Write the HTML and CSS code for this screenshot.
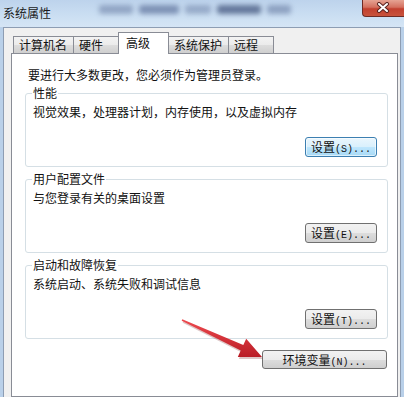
FILE: index.html
```html
<!DOCTYPE html>
<html lang="zh-CN">
<head>
  <meta charset="UTF-8">
  <meta name="viewport" content="width=device-width, initial-scale=1.0">
  <title>系统属性</title>
  <link rel="stylesheet" href="styles.css">
</head>
<body>

<div class="window">
  <div class="titlebar">
    <span class="title">系统属性</span>
    <div class="title-blur">
      <i class="b1"></i><i class="b2"></i><i class="b3"></i><i class="b4"></i><i class="b5"></i>
    </div>
    <button class="close">
      <svg width="14" height="11" viewBox="0 0 14 11">
        <path d="M3 2 L11 9 M11 2 L3 9" stroke="#5a2420" stroke-width="4" stroke-linecap="round"/>
        <path d="M3 2 L11 9 M11 2 L3 9" stroke="#ffffff" stroke-width="2" stroke-linecap="round"/>
      </svg>
    </button>
  </div>

  <div class="client">
    <div class="tabs">
      <div class="tab">计算机名</div>
      <div class="tab">硬件</div>
      <div class="tab active">高级</div>
      <div class="tab">系统保护</div>
      <div class="tab">远程</div>
    </div>

    <div class="panel">
      <p class="note">要进行大多数更改，您必须作为管理员登录。</p>

      <div class="group">
        <div class="group-title">性能</div>
        <div class="group-desc">视觉效果，处理器计划，内存使用，以及虚拟内存</div>
        <div class="group-actions">
          <button class="btn focused">设置<span class="key">(S)...</span></button>
        </div>
      </div>

      <div class="group">
        <div class="group-title">用户配置文件</div>
        <div class="group-desc">与您登录有关的桌面设置</div>
        <div class="group-actions">
          <button class="btn">设置<span class="key">(E)...</span></button>
        </div>
      </div>

      <div class="group">
        <div class="group-title">启动和故障恢复</div>
        <div class="group-desc">系统启动、系统失败和调试信息</div>
        <div class="group-actions">
          <button class="btn">设置<span class="key">(T)...</span></button>
        </div>
      </div>

      <div class="panel-actions">
        <button class="btn wide">环境变量<span class="key">(N)...</span></button>
      </div>
    </div>
  </div>

  <!-- red pointer arrow drawn over the dialog -->
  <svg class="arrow" width="404" height="397" viewBox="0 0 404 397">
    <defs>
      <linearGradient id="arrowFill" x1="0" y1="0" x2="0" y2="1">
        <stop offset="0" stop-color="#ee4a4f"/>
        <stop offset="1" stop-color="#b91c25"/>
      </linearGradient>
    </defs>
    <polygon points="182.3,319.3 243.3,345.1 246.2,338.7 262,357 237.8,356.9 240.7,350.5 181.7,320.7"
             fill="#7a1a1a" opacity="0.25" transform="translate(1,2)"/>
    <polygon points="182.3,319.3 243.3,345.1 246.2,338.7 262,357 237.8,356.9 240.7,350.5 181.7,320.7"
             fill="url(#arrowFill)"/>
  </svg>
</div>

</body>
</html>
```

FILE: styles.css
```css
body {
  margin: 0;
  padding: 0;
  font-family: "Noto Sans CJK SC", "Noto Sans", sans-serif;
  font-size: 12px;
  color: #111;
  overflow: hidden;
}

.window {
  position: relative;
  width: 404px;
  height: 397px;
  background: #b9d0e9;
  display: flex;
  flex-direction: column;
  overflow: hidden;
}

.titlebar {
  height: 27px;
  flex-shrink: 0;
  display: flex;
  align-items: flex-start;
  background: linear-gradient(to bottom, #bdd3ec, #cadef2 55%, #d5e5f5);
}

.title {
  margin: 5px 0 0 3px;
  line-height: 16px;
  color: #1b1b1b;
}

.title-blur {
  display: flex;
  gap: 6px;
  margin: 4px 0 0 48px;
  filter: blur(2.5px);
}

.title-blur i {
  display: block;
  height: 9px;
  margin-top: 1px;
  background: #60749c;
  opacity: 0.7;
  border-radius: 3px;
}

.title-blur .b1 { width: 34px; opacity: 0.5; }
.title-blur .b2 { width: 40px; }
.title-blur .b3 { width: 26px; opacity: 0.45; }
.title-blur .b4 { width: 44px; background: #3c4f78; }
.title-blur .b5 { width: 24px; opacity: 0.55; }

.close {
  margin-left: auto;
  width: 42px;
  height: 17px;
  padding: 0;
  border: 1px solid #6e2b25;
  border-top: none;
  border-right: none;
  border-radius: 0 0 0 4px;
  background: linear-gradient(to bottom, #e6a393, #d4705f 45%, #c2402f 55%, #c8533c);
  display: flex;
  align-items: center;
  justify-content: center;
  flex-shrink: 0;
}

.close svg {
  margin-left: -2px;
  margin-top: -1px;
}

.client {
  flex: 1;
  margin: 0 3px;
  border: 1px solid #8d9db3;
  border-bottom: none;
  background: #f0f0f0;
  padding: 0 2px 0 7px;
  display: flex;
  flex-direction: column;
}

.tabs {
  display: flex;
  align-items: flex-end;
  padding: 4px 0 0 2px;
}

.tab {
  box-sizing: border-box;
  height: 17px;
  min-width: 46px;
  padding: 0 6px 0 5px;
  margin-right: -1px;
  border: 1px solid #898c95;
  border-bottom: none;
  background: linear-gradient(to bottom, #f3f3f3, #ebebeb 50%, #dddddd 51%, #cfcfcf);
  line-height: 16px;
  white-space: nowrap;
}

.tab.active {
  position: relative;
  z-index: 1;
  height: 22px;
  min-width: 51px;
  margin: 0 -1px -1px 0;
  padding-left: 7px;
  background: #fff;
  line-height: 20px;
}

.panel {
  flex: 1;
  background: #fff;
  border: 1px solid #898c95;
  padding: 13px 9px 0 13px;
}

.note {
  margin: 0 0 0 3px;
  line-height: 16px;
}

.group {
  margin-top: 10px;
  border: 1px solid #d5dfe5;
  border-radius: 3px;
  padding: 0 10px 9px 7px;
}

.group + .group {
  margin-top: 12px;
}

.group-title {
  width: fit-content;
  margin: -9px 0 0 -1px;
  padding: 0 1px;
  background: #fff;
  line-height: 16px;
}

.group-desc {
  margin-top: 3px;
  line-height: 16px;
}

.group-actions {
  display: flex;
  justify-content: flex-end;
  margin-top: 17px;
}

.panel-actions {
  display: flex;
  justify-content: flex-end;
  margin: 11px 1px 0 0;
}

.btn {
  box-sizing: border-box;
  width: 72px;
  height: 20px;
  padding: 0;
  border: 1px solid #707070;
  border-radius: 3px;
  background: linear-gradient(to bottom, #f2f2f2, #ebebeb 50%, #dddddd 51%, #cfcfcf);
  font-family: "Noto Sans CJK SC", "Noto Sans", sans-serif;
  font-size: 12px;
  color: #111;
  line-height: 18px;
  white-space: nowrap;
}

.btn.focused {
  border-color: #3c7fb1;
  background: linear-gradient(to bottom, #eaf6fd, #d9f0fc 50%, #bee6fd 51%, #a7d9f5);
  box-shadow: inset 0 0 0 1px rgba(255, 255, 255, 0.6);
}

.btn.wide {
  width: 125px;
  height: 19px;
  line-height: 17px;
}

.key {
  font-family: "Liberation Mono", monospace;
  font-size: 10px;
}

.arrow {
  position: absolute;
  top: 0;
  left: 0;
  pointer-events: none;
}
```
